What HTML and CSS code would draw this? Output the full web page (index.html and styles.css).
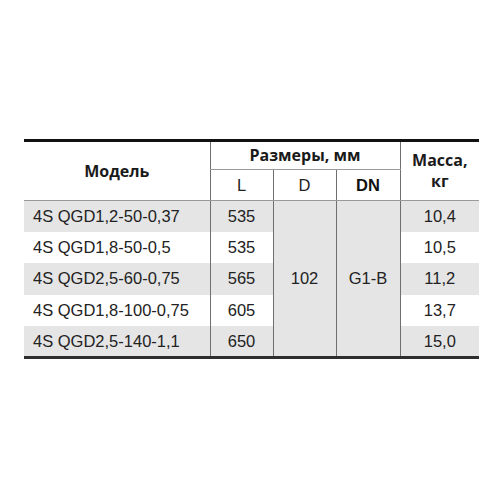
FILE: index.html
```html
<!DOCTYPE html>
<html>
<head>
<meta charset="utf-8">
<link rel="stylesheet" href="styles.css">
</head>
<body>
<div class="page">
<table class="spec">
  <colgroup>
    <col class="c-model"><col class="c-l"><col class="c-d"><col class="c-dn"><col class="c-mass">
  </colgroup>
  <thead>
    <tr class="h1">
      <th rowspan="2" class="hd left-col">Модель</th>
      <th colspan="3" class="hd">Размеры, мм</th>
      <th rowspan="2" class="hd mass">Масса,<br>кг</th>
    </tr>
    <tr class="h2">
      <th class="sub">L</th>
      <th class="sub">D</th>
      <th class="sub dn">DN</th>
    </tr>
  </thead>
  <tbody>
    <tr class="odd"><td class="model">4S QGD1,2-50-0,37</td><td>535</td><td rowspan="5" class="merged">102</td><td rowspan="5" class="merged">G1-B</td><td>10,4</td></tr>
    <tr><td class="model">4S QGD1,8-50-0,5</td><td>535</td><td>10,5</td></tr>
    <tr class="odd"><td class="model">4S QGD2,5-60-0,75</td><td>565</td><td>11,2</td></tr>
    <tr><td class="model">4S QGD1,8-100-0,75</td><td>605</td><td>13,7</td></tr>
    <tr class="odd"><td class="model">4S QGD2,5-140-1,1</td><td>650</td><td>15,0</td></tr>
  </tbody>
</table>
</div>
</body>
</html>
```

FILE: styles.css
```css
html, body {
  margin: 0;
  padding: 0;
  background: #ffffff;
}

.page {
  padding: 139px 0 0 24px;
}

.spec {
  border-collapse: collapse;
  table-layout: fixed;
  width: 455px;
  border-top: 3px solid #111111;
  border-bottom: 3px solid #2e2e2e;
  font-family: "Liberation Sans", Arial, sans-serif;
  font-size: 16.5px;
  color: #222222;
}

.c-model { width: 186px; }
.c-l { width: 63px; }
.c-d { width: 63px; }
.c-dn { width: 64px; }
.c-mass { width: 79px; }

.spec th, .spec td {
  padding: 0;
  text-align: center;
  vertical-align: middle;
  border-left: 1px solid #6f6f6f;
}

.spec th:first-child, .spec td:first-child {
  border-left: none;
}

.h1 { height: 29px; }
.h2 { height: 31px; }

.hd {
  font-family: "Open Sans", "Liberation Sans", sans-serif;
  font-weight: 700;
  font-size: 16px;
  color: #1a1a1a;
  line-height: 21px;
  border-bottom: 1px solid #9a9a9a;
}

.h1 .left-col { border-left: none; }

.sub {
  font-family: "Liberation Sans", Arial, sans-serif;
  font-weight: 400;
  font-size: 16.5px;
  color: #222222;
  border-bottom: 1px solid #9a9a9a;
}

.sub.dn {
  font-weight: 700;
  color: #111111;
}

.h2 .sub:first-child {
  border-left: 1px solid #6f6f6f;
}

.spec tbody tr { height: 31.4px; }

.spec tbody tr.odd td { background: #e5e5e5; }

.spec td.merged { background: #e5e5e5; }

.spec td.model {
  text-align: left;
  padding-left: 9px;
}
```
